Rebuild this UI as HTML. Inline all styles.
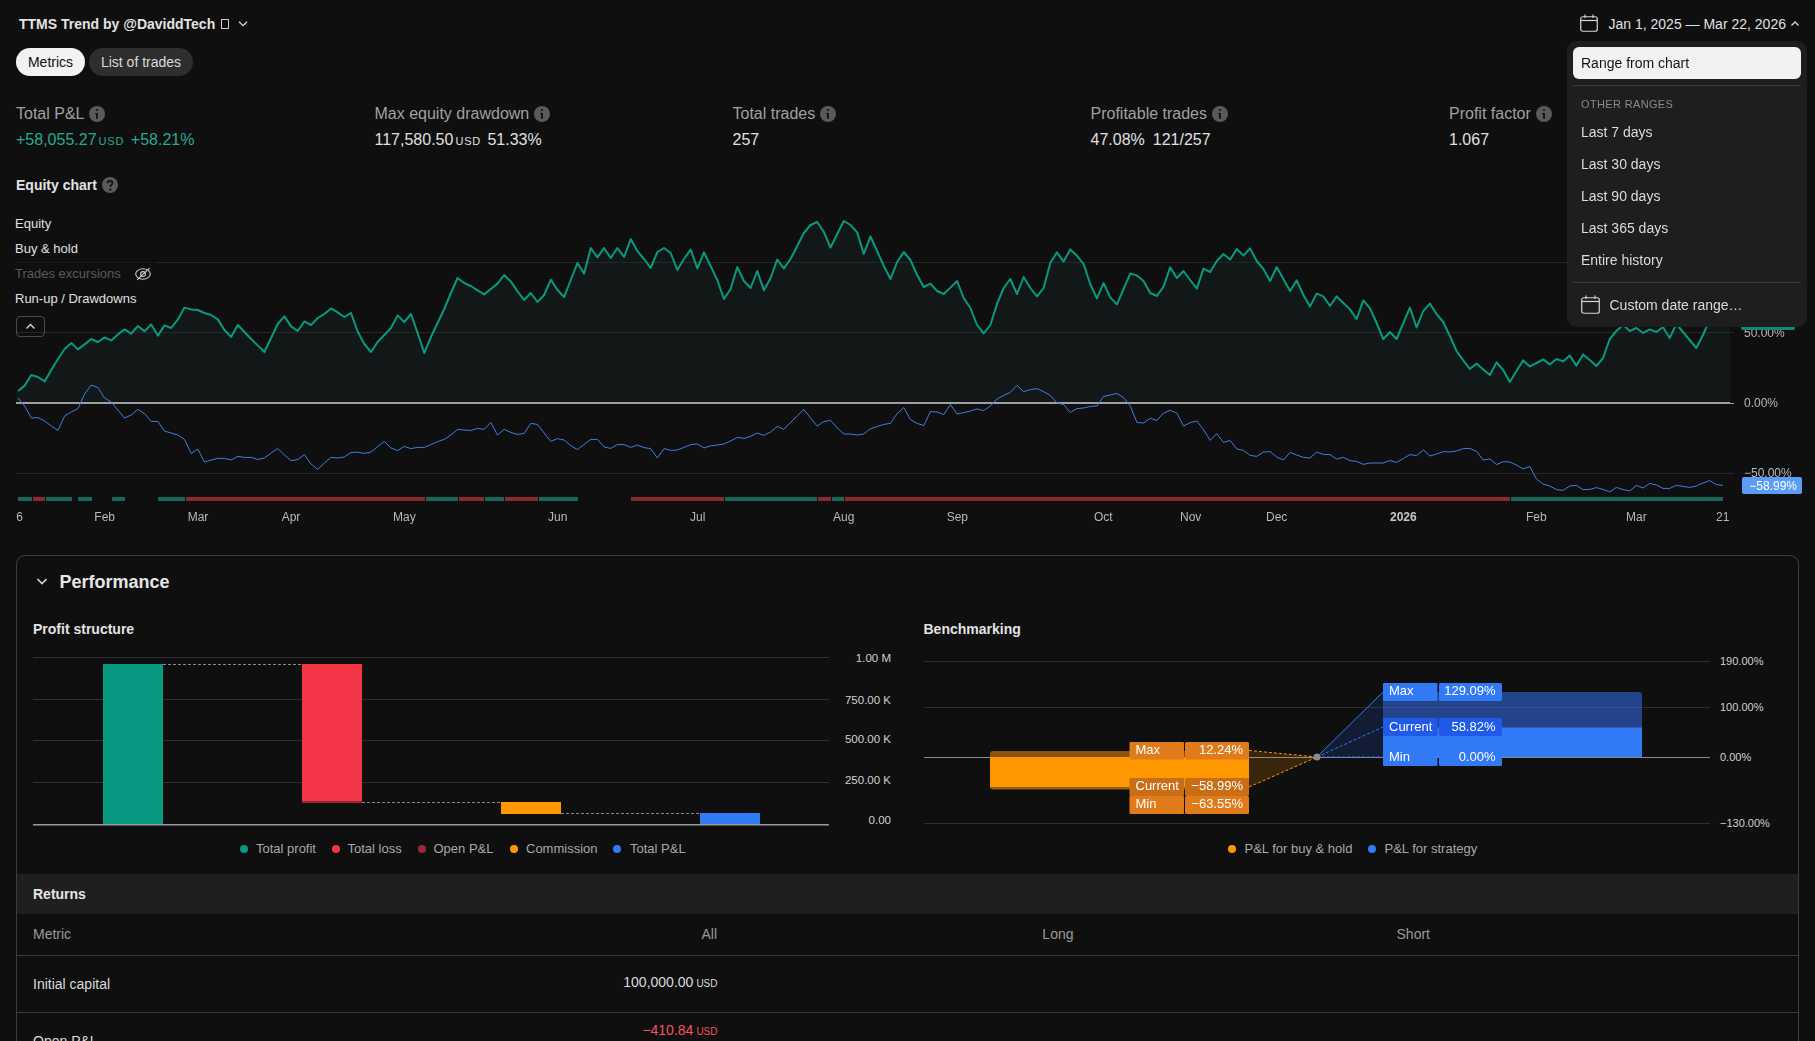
<!DOCTYPE html>
<html><head><meta charset="utf-8"><title>Strategy report</title>
<style>
html,body{margin:0;padding:0;background:#0f0f0f;width:1815px;height:1041px;overflow:hidden;font-family:"Liberation Sans",sans-serif}
.t{position:absolute;white-space:nowrap}
.z{z-index:6}
.layer{position:absolute;left:0;top:0}
.ic{position:absolute}
.pill{position:absolute;height:28px;border-radius:14px}
.usd{font-size:11px;margin-left:2px;letter-spacing:0.8px}
.usd2{font-size:10px;margin-left:3px}
.info{position:absolute;width:16px;height:16px;border-radius:8px;background:#5f5f5f;color:#121212;font:bold 12px/16px "Liberation Sans",sans-serif;text-align:center}
.q{position:absolute;width:16px;height:16px;border-radius:8px;background:#5f5f5f;color:#121212;font:bold 12px/16px "Liberation Sans",sans-serif;text-align:center}
.gs{position:absolute;left:0;top:0;width:0;height:0;will-change:transform}
.lgbg{position:absolute;background:rgba(15,15,15,0.6)}
</style></head><body>
<svg class="layer" width="1815" height="1041" viewBox="0 0 1815 1041"><path d="M16,391 L18.00,391.0 L24.66,385.6 L31.32,375.0 L37.98,377.0 L44.64,381.4 L51.30,370.0 L57.96,359.0 L64.62,349.0 L71.28,343.0 L77.94,349.4 L84.60,344.4 L91.26,339.0 L97.92,342.0 L104.58,337.4 L111.24,340.4 L117.90,334.4 L124.56,329.4 L131.22,333.6 L137.88,326.0 L144.54,331.4 L151.20,324.4 L157.86,335.6 L164.52,325.4 L171.18,328.0 L177.84,319.4 L184.50,307.6 L191.16,309.4 L197.82,310.0 L204.48,313.0 L211.14,315.0 L217.80,319.4 L224.46,330.0 L231.12,337.0 L237.78,325.0 L244.44,332.0 L251.10,339.0 L257.76,345.4 L264.42,352.0 L271.08,338.0 L277.74,324.0 L284.40,316.4 L291.06,326.4 L297.72,331.0 L304.38,321.4 L311.04,325.0 L317.70,318.0 L324.36,314.0 L331.02,308.4 L337.68,312.4 L344.34,317.0 L351.00,313.0 L357.66,331.5 L364.32,344.0 L370.98,352.0 L377.64,342.0 L384.30,335.0 L390.96,328.0 L397.62,315.4 L404.28,322.0 L410.94,314.0 L417.60,333.0 L424.26,353.0 L430.92,337.0 L437.58,323.0 L444.24,309.0 L450.90,293.0 L457.56,278.0 L464.22,283.0 L470.88,286.0 L477.54,290.4 L484.20,294.4 L490.86,289.0 L497.52,283.6 L504.18,275.0 L510.84,281.4 L517.50,291.4 L524.16,300.0 L530.82,293.0 L537.48,302.0 L544.14,295.0 L550.80,279.6 L557.46,290.0 L564.12,297.0 L570.78,280.0 L577.44,263.0 L584.10,273.6 L590.76,248.0 L597.42,257.4 L604.08,248.0 L610.74,258.0 L617.40,248.0 L624.06,257.0 L630.72,239.0 L637.38,251.0 L644.04,259.0 L650.70,268.0 L657.36,252.0 L664.02,248.0 L670.68,253.0 L677.34,270.0 L684.00,259.0 L690.66,249.6 L697.32,268.4 L703.98,252.4 L710.64,266.0 L717.30,280.0 L723.96,299.0 L730.62,289.0 L737.28,267.0 L743.94,281.0 L750.60,288.0 L757.26,271.0 L763.92,290.4 L770.58,278.0 L777.24,259.6 L783.90,268.4 L790.56,259.0 L797.22,246.0 L803.88,233.0 L810.54,225.0 L817.20,222.0 L823.86,232.0 L830.52,247.6 L837.18,234.0 L843.84,221.0 L850.50,225.0 L857.16,232.4 L863.82,254.0 L870.48,236.4 L877.14,251.0 L883.80,266.0 L890.46,279.0 L897.12,262.0 L903.78,252.0 L910.44,260.0 L917.10,275.0 L923.76,287.0 L930.42,283.6 L937.08,291.0 L943.74,294.0 L950.40,287.6 L957.06,281.0 L963.72,298.0 L970.38,308.0 L977.04,325.0 L983.70,333.4 L990.36,325.0 L997.02,304.0 L1003.68,288.0 L1010.34,279.0 L1017.00,294.0 L1023.66,277.0 L1030.32,288.0 L1036.98,296.4 L1043.64,288.0 L1050.30,263.0 L1056.96,252.4 L1063.62,261.6 L1070.28,249.4 L1076.94,255.6 L1083.60,264.0 L1090.26,284.0 L1096.92,298.4 L1103.58,283.0 L1110.24,297.4 L1116.90,304.4 L1123.56,289.0 L1130.22,273.6 L1136.88,275.4 L1143.54,281.0 L1150.20,293.0 L1156.86,296.0 L1163.52,286.6 L1170.18,267.4 L1176.84,278.0 L1183.50,271.0 L1190.16,280.0 L1196.82,288.6 L1203.48,268.6 L1210.14,272.0 L1216.80,261.0 L1223.46,254.0 L1230.12,259.6 L1236.78,249.0 L1243.44,255.6 L1250.10,248.4 L1256.76,261.0 L1263.42,269.0 L1270.08,281.0 L1276.74,267.0 L1283.40,279.0 L1290.06,291.0 L1296.72,280.4 L1303.38,295.0 L1310.04,306.4 L1316.70,293.6 L1323.36,296.4 L1330.02,306.0 L1336.68,296.4 L1343.34,303.0 L1350.00,309.4 L1356.66,319.0 L1363.32,300.4 L1369.98,308.4 L1376.64,323.0 L1383.30,339.0 L1389.96,332.0 L1396.62,339.0 L1403.28,323.0 L1409.94,307.6 L1416.60,327.5 L1423.26,311.0 L1429.92,303.6 L1436.58,314.0 L1443.24,322.0 L1449.90,336.0 L1456.56,351.0 L1463.22,360.4 L1469.88,369.0 L1476.54,363.6 L1483.20,369.4 L1489.86,375.0 L1496.52,362.4 L1503.18,370.0 L1509.84,382.0 L1516.50,371.0 L1523.16,360.4 L1529.82,366.4 L1536.48,363.0 L1543.14,359.4 L1549.80,364.4 L1556.46,359.0 L1563.12,361.4 L1569.78,355.6 L1576.44,365.6 L1583.10,354.4 L1589.76,360.0 L1596.42,366.0 L1603.08,358.0 L1609.74,339.0 L1616.40,331.0 L1623.06,325.0 L1629.72,331.0 L1636.38,328.0 L1643.04,333.0 L1649.70,329.4 L1656.36,332.0 L1663.02,327.0 L1669.68,338.0 L1676.34,324.0 L1683.00,332.0 L1689.66,340.0 L1696.32,348.0 L1702.98,335.0 L1709.64,320.0 L1716.30,318.0 L1722.96,321.0 L1730,321 L1730,402 L16,402 Z" fill="#121817"/><line x1="16" y1="262.5" x2="1734" y2="262.5" stroke="#2a2a2a" stroke-width="1" stroke-opacity="0.85"/><line x1="16" y1="332.5" x2="1734" y2="332.5" stroke="#2a2a2a" stroke-width="1" stroke-opacity="0.85"/><line x1="16" y1="473.5" x2="1734" y2="473.5" stroke="#2a2a2a" stroke-width="1" stroke-opacity="0.85"/><rect x="16" y="402" width="1714" height="2" fill="#a0a0a0"/><rect x="1730" y="403" width="4" height="1" fill="#a0a0a0"/><polyline points="18.00,391.0 24.66,385.6 31.32,375.0 37.98,377.0 44.64,381.4 51.30,370.0 57.96,359.0 64.62,349.0 71.28,343.0 77.94,349.4 84.60,344.4 91.26,339.0 97.92,342.0 104.58,337.4 111.24,340.4 117.90,334.4 124.56,329.4 131.22,333.6 137.88,326.0 144.54,331.4 151.20,324.4 157.86,335.6 164.52,325.4 171.18,328.0 177.84,319.4 184.50,307.6 191.16,309.4 197.82,310.0 204.48,313.0 211.14,315.0 217.80,319.4 224.46,330.0 231.12,337.0 237.78,325.0 244.44,332.0 251.10,339.0 257.76,345.4 264.42,352.0 271.08,338.0 277.74,324.0 284.40,316.4 291.06,326.4 297.72,331.0 304.38,321.4 311.04,325.0 317.70,318.0 324.36,314.0 331.02,308.4 337.68,312.4 344.34,317.0 351.00,313.0 357.66,331.5 364.32,344.0 370.98,352.0 377.64,342.0 384.30,335.0 390.96,328.0 397.62,315.4 404.28,322.0 410.94,314.0 417.60,333.0 424.26,353.0 430.92,337.0 437.58,323.0 444.24,309.0 450.90,293.0 457.56,278.0 464.22,283.0 470.88,286.0 477.54,290.4 484.20,294.4 490.86,289.0 497.52,283.6 504.18,275.0 510.84,281.4 517.50,291.4 524.16,300.0 530.82,293.0 537.48,302.0 544.14,295.0 550.80,279.6 557.46,290.0 564.12,297.0 570.78,280.0 577.44,263.0 584.10,273.6 590.76,248.0 597.42,257.4 604.08,248.0 610.74,258.0 617.40,248.0 624.06,257.0 630.72,239.0 637.38,251.0 644.04,259.0 650.70,268.0 657.36,252.0 664.02,248.0 670.68,253.0 677.34,270.0 684.00,259.0 690.66,249.6 697.32,268.4 703.98,252.4 710.64,266.0 717.30,280.0 723.96,299.0 730.62,289.0 737.28,267.0 743.94,281.0 750.60,288.0 757.26,271.0 763.92,290.4 770.58,278.0 777.24,259.6 783.90,268.4 790.56,259.0 797.22,246.0 803.88,233.0 810.54,225.0 817.20,222.0 823.86,232.0 830.52,247.6 837.18,234.0 843.84,221.0 850.50,225.0 857.16,232.4 863.82,254.0 870.48,236.4 877.14,251.0 883.80,266.0 890.46,279.0 897.12,262.0 903.78,252.0 910.44,260.0 917.10,275.0 923.76,287.0 930.42,283.6 937.08,291.0 943.74,294.0 950.40,287.6 957.06,281.0 963.72,298.0 970.38,308.0 977.04,325.0 983.70,333.4 990.36,325.0 997.02,304.0 1003.68,288.0 1010.34,279.0 1017.00,294.0 1023.66,277.0 1030.32,288.0 1036.98,296.4 1043.64,288.0 1050.30,263.0 1056.96,252.4 1063.62,261.6 1070.28,249.4 1076.94,255.6 1083.60,264.0 1090.26,284.0 1096.92,298.4 1103.58,283.0 1110.24,297.4 1116.90,304.4 1123.56,289.0 1130.22,273.6 1136.88,275.4 1143.54,281.0 1150.20,293.0 1156.86,296.0 1163.52,286.6 1170.18,267.4 1176.84,278.0 1183.50,271.0 1190.16,280.0 1196.82,288.6 1203.48,268.6 1210.14,272.0 1216.80,261.0 1223.46,254.0 1230.12,259.6 1236.78,249.0 1243.44,255.6 1250.10,248.4 1256.76,261.0 1263.42,269.0 1270.08,281.0 1276.74,267.0 1283.40,279.0 1290.06,291.0 1296.72,280.4 1303.38,295.0 1310.04,306.4 1316.70,293.6 1323.36,296.4 1330.02,306.0 1336.68,296.4 1343.34,303.0 1350.00,309.4 1356.66,319.0 1363.32,300.4 1369.98,308.4 1376.64,323.0 1383.30,339.0 1389.96,332.0 1396.62,339.0 1403.28,323.0 1409.94,307.6 1416.60,327.5 1423.26,311.0 1429.92,303.6 1436.58,314.0 1443.24,322.0 1449.90,336.0 1456.56,351.0 1463.22,360.4 1469.88,369.0 1476.54,363.6 1483.20,369.4 1489.86,375.0 1496.52,362.4 1503.18,370.0 1509.84,382.0 1516.50,371.0 1523.16,360.4 1529.82,366.4 1536.48,363.0 1543.14,359.4 1549.80,364.4 1556.46,359.0 1563.12,361.4 1569.78,355.6 1576.44,365.6 1583.10,354.4 1589.76,360.0 1596.42,366.0 1603.08,358.0 1609.74,339.0 1616.40,331.0 1623.06,325.0 1629.72,331.0 1636.38,328.0 1643.04,333.0 1649.70,329.4 1656.36,332.0 1663.02,327.0 1669.68,338.0 1676.34,324.0 1683.00,332.0 1689.66,340.0 1696.32,348.0 1702.98,335.0 1709.64,320.0 1716.30,318.0 1722.96,321.0" fill="none" stroke="#089981" stroke-width="2" stroke-linejoin="round"/><polyline points="18.00,398.0 24.66,406.0 31.32,418.0 37.98,417.6 44.64,421.0 51.30,426.0 57.96,430.4 64.62,416.0 71.28,412.0 77.94,408.6 84.60,394.0 91.26,385.0 97.92,387.6 104.58,398.0 111.24,402.0 117.90,410.0 124.56,418.0 131.22,415.0 137.88,409.4 144.54,413.6 151.20,421.4 157.86,421.4 164.52,431.0 171.18,433.0 177.84,435.0 184.50,439.4 191.16,453.6 197.82,449.0 204.48,462.0 211.14,460.0 217.80,458.4 224.46,458.4 231.12,460.0 237.78,456.4 244.44,457.4 251.10,457.4 257.76,459.4 264.42,458.0 271.08,453.0 277.74,448.4 284.40,455.0 291.06,460.6 297.72,459.6 304.38,454.6 311.04,464.0 317.70,469.4 324.36,463.0 331.02,457.4 337.68,458.0 344.34,457.0 351.00,452.4 357.66,452.2 364.32,453.4 370.98,452.0 377.64,446.6 384.30,441.4 390.96,448.0 397.62,450.6 404.28,446.4 410.94,448.6 417.60,447.4 424.26,447.4 430.92,444.6 437.58,441.6 444.24,439.4 450.90,435.0 457.56,429.4 464.22,430.0 470.88,430.4 477.54,428.4 484.20,429.4 490.86,422.4 497.52,435.0 504.18,429.4 510.84,432.4 517.50,434.4 524.16,433.4 530.82,423.4 537.48,424.4 544.14,433.0 550.80,441.4 557.46,438.6 564.12,440.0 570.78,445.6 577.44,449.6 584.10,444.4 590.76,439.4 597.42,439.4 604.08,447.0 610.74,448.4 617.40,444.6 624.06,444.6 630.72,447.4 637.38,445.0 644.04,447.6 650.70,448.6 657.36,458.0 664.02,448.6 670.68,450.4 677.34,450.0 684.00,447.4 690.66,444.6 697.32,444.0 703.98,448.0 710.64,445.8 717.30,445.0 723.96,444.0 730.62,441.0 737.28,437.4 743.94,438.4 750.60,436.4 757.26,433.0 763.92,435.4 770.58,432.0 777.24,426.4 783.90,429.4 790.56,422.4 797.22,416.0 803.88,409.4 810.54,418.0 817.20,426.0 823.86,421.6 830.52,420.4 837.18,428.0 843.84,434.0 850.50,434.0 857.16,435.0 863.82,434.0 870.48,428.6 877.14,426.6 883.80,424.4 890.46,423.4 897.12,413.6 903.78,407.6 910.44,419.6 917.10,423.4 923.76,425.6 930.42,411.6 937.08,412.0 943.74,414.6 950.40,404.4 957.06,414.0 963.72,412.6 970.38,411.0 977.04,409.0 983.70,410.6 990.36,406.0 997.02,399.0 1003.68,395.4 1010.34,392.4 1017.00,385.4 1023.66,391.6 1030.32,389.6 1036.98,388.6 1043.64,391.6 1050.30,395.4 1056.96,403.0 1063.62,404.5 1070.28,412.4 1076.94,408.6 1083.60,408.0 1090.26,406.4 1096.92,406.0 1103.58,396.4 1110.24,395.0 1116.90,393.4 1123.56,397.6 1130.22,406.0 1136.88,422.4 1143.54,423.0 1150.20,418.4 1156.86,420.4 1163.52,413.0 1170.18,410.4 1176.84,413.0 1183.50,426.0 1190.16,422.6 1196.82,421.0 1203.48,429.6 1210.14,440.4 1216.80,433.6 1223.46,442.4 1230.12,440.4 1236.78,449.0 1243.44,450.4 1250.10,455.4 1256.76,456.4 1263.42,452.0 1270.08,451.6 1276.74,457.0 1283.40,460.0 1290.06,452.4 1296.72,455.0 1303.38,457.4 1310.04,458.0 1316.70,452.0 1323.36,454.4 1330.02,454.6 1336.68,459.0 1343.34,457.4 1350.00,460.6 1356.66,461.4 1363.32,464.4 1369.98,463.0 1376.64,463.0 1383.30,463.0 1389.96,460.6 1396.62,462.4 1403.28,458.6 1409.94,454.6 1416.60,455.6 1423.26,450.0 1429.92,456.0 1436.58,454.0 1443.24,451.6 1449.90,452.0 1456.56,451.0 1463.22,448.6 1469.88,448.4 1476.54,451.4 1483.20,460.0 1489.86,459.0 1496.52,464.6 1503.18,461.6 1509.84,462.0 1516.50,465.0 1523.16,469.0 1529.82,466.4 1536.48,479.0 1543.14,484.0 1549.80,486.0 1556.46,489.6 1563.12,490.4 1569.78,486.0 1576.44,485.4 1583.10,489.6 1589.76,489.4 1596.42,487.6 1603.08,489.4 1609.74,492.0 1616.40,487.4 1623.06,489.6 1629.72,491.0 1636.38,485.4 1643.04,488.0 1649.70,483.4 1656.36,485.0 1663.02,488.4 1669.68,488.4 1676.34,485.4 1683.00,486.4 1689.66,487.4 1696.32,486.0 1702.98,483.0 1709.64,480.6 1716.30,484.6 1722.96,485.4" fill="none" stroke="#3f7fe0" stroke-width="1" stroke-linejoin="round"/><rect x="18" y="497" width="14" height="4" fill="#16695a"/><rect x="33" y="497" width="12" height="4" fill="#8c2830"/><rect x="46" y="497" width="26" height="4" fill="#16695a"/><rect x="78" y="497" width="14" height="4" fill="#16695a"/><rect x="112" y="497" width="13" height="4" fill="#16695a"/><rect x="158" y="497" width="27" height="4" fill="#16695a"/><rect x="186" y="497" width="239" height="4" fill="#8c2830"/><rect x="426" y="497" width="32" height="4" fill="#16695a"/><rect x="459" y="497" width="25" height="4" fill="#8c2830"/><rect x="485" y="497" width="19" height="4" fill="#16695a"/><rect x="505" y="497" width="33" height="4" fill="#8c2830"/><rect x="539" y="497" width="39" height="4" fill="#16695a"/><rect x="631" y="497" width="93" height="4" fill="#8c2830"/><rect x="725" y="497" width="92" height="4" fill="#16695a"/><rect x="818" y="497" width="13" height="4" fill="#8c2830"/><rect x="832" y="497" width="12" height="4" fill="#16695a"/><rect x="845" y="497" width="665" height="4" fill="#8c2830"/><rect x="1511" y="497" width="212" height="4" fill="#16695a"/><line x1="33" y1="657.5" x2="829" y2="657.5" stroke="#2e2e2e" stroke-width="1"/><line x1="33" y1="699.5" x2="829" y2="699.5" stroke="#2e2e2e" stroke-width="1"/><line x1="33" y1="740.5" x2="829" y2="740.5" stroke="#2e2e2e" stroke-width="1"/><line x1="33" y1="782.5" x2="829" y2="782.5" stroke="#2e2e2e" stroke-width="1"/><rect x="33" y="824" width="796" height="1.5" fill="#9a9a9a"/><rect x="103" y="664" width="60" height="160" fill="#089981"/><rect x="302" y="664" width="60" height="137.5" fill="#f23645"/><rect x="302" y="801.5" width="60" height="1.5" fill="#992b35"/><rect x="501" y="802" width="60" height="12" fill="#ff9800"/><rect x="700" y="813" width="60" height="11" fill="#2f7bf5"/><line x1="163" y1="664.5" x2="302" y2="664.5" stroke="#8a8a8a" stroke-width="1" stroke-dasharray="3 2"/><line x1="362" y1="802.5" x2="501" y2="802.5" stroke="#8a8a8a" stroke-width="1" stroke-dasharray="3 2"/><line x1="561" y1="813.5" x2="700" y2="813.5" stroke="#8a8a8a" stroke-width="1" stroke-dasharray="3 2"/><line x1="924" y1="661.5" x2="1710" y2="661.5" stroke="#2e2e2e" stroke-width="1"/><line x1="924" y1="707.5" x2="1710" y2="707.5" stroke="#2e2e2e" stroke-width="1"/><line x1="924" y1="823.5" x2="1710" y2="823.5" stroke="#2e2e2e" stroke-width="1"/><rect x="924" y="757" width="786" height="1" fill="#8a8a8a"/><path d="M990,754 Q990,751 993,751 L1249,751 L1249,757 L990,757 Z" fill="#8a5410"/><rect x="990" y="757" width="259" height="30" fill="#ff9800"/><path d="M990,787 L1249,787 L1249,789.5 L993,789.5 Q990,789.5 990,786.5 Z" fill="#9a5c0e"/><path d="M1249,751 L1317,757 L1249,787 Z" fill="#ff9800" fill-opacity="0.17"/><line x1="1249" y1="750.5" x2="1317" y2="757" stroke="#ff9800" stroke-width="1" stroke-dasharray="3 2"/><line x1="1249" y1="787" x2="1317" y2="757" stroke="#ff9800" stroke-width="1" stroke-dasharray="3 2"/><path d="M1383,692 L1639,692 Q1642,692 1642,695 L1642,728 L1383,728 Z" fill="#23438a"/><rect x="1383" y="727.5" width="259" height="29.5" fill="#3179f5"/><path d="M1317,757 L1383,692 L1383,757 Z" fill="#2962ff" fill-opacity="0.16"/><line x1="1317" y1="757" x2="1383" y2="692" stroke="#3179f5" stroke-width="1"/><line x1="1317" y1="757" x2="1383" y2="727" stroke="#3179f5" stroke-width="1" stroke-dasharray="3 2"/><line x1="1317" y1="757" x2="1383" y2="757" stroke="#3179f5" stroke-width="1" stroke-dasharray="3 2"/><rect x="1129.5" y="742" width="54.5" height="17.5" rx="1" fill="#e07b1c"/><rect x="1185" y="742" width="64" height="17.5" rx="1.5" fill="#e07b1c"/><rect x="1129.5" y="778" width="54.5" height="18" rx="1" fill="#c96d16"/><rect x="1185" y="778" width="64" height="18" rx="1.5" fill="#c96d16"/><rect x="1129.5" y="796" width="54.5" height="18" rx="1" fill="#e07b1c"/><rect x="1185" y="796" width="64" height="18" rx="1.5" fill="#e07b1c"/><rect x="1383" y="683" width="54.5" height="18" rx="1" fill="#3179f5"/><rect x="1439" y="683" width="63" height="18" rx="1.5" fill="#3179f5"/><rect x="1383" y="718" width="54.5" height="18" rx="1" fill="#1f5be8"/><rect x="1439" y="718" width="63" height="18" rx="1.5" fill="#1f5be8"/><rect x="1383" y="748" width="54.5" height="18" rx="1" fill="#3179f5"/><rect x="1439" y="748" width="63" height="18" rx="1.5" fill="#3179f5"/><line x1="1383" y1="707.5" x2="1642" y2="707.5" stroke="#ffffff" stroke-opacity="0.07" stroke-width="1"/><circle cx="1317" cy="757" r="3.5" fill="#8a8a8a"/><circle cx="244" cy="849" r="4" fill="#089981"/><circle cx="336" cy="849" r="4" fill="#f23645"/><circle cx="422" cy="849" r="4" fill="#992b35"/><circle cx="514" cy="849" r="4" fill="#ff9800"/><circle cx="617" cy="849" r="4" fill="#2f7bf5"/><circle cx="1232" cy="849" r="4" fill="#ff9800"/><circle cx="1372" cy="849" r="4" fill="#2f7bf5"/></svg>
<div class="t" style="left:19px;top:15.95px;font-size:14px;line-height:17px;color:#e3e3e3;font-weight:700;">TTMS Trend by @DaviddTech</div>
<div style="position:absolute;left:220.5px;top:19px;width:6px;height:8px;border:1px solid #c8c8c8"></div>
<svg class="ic" style="left:238px;top:20px" width="10" height="8" viewBox="0 0 10 8"><path d="M1,1.8 L5,5.6 L9,1.8" fill="none" stroke="#d6d6d6" stroke-width="1.3"/></svg>
<div class="pill" style="left:16px;top:48px;width:69px;background:#f2f2f2"></div>
<div class="pill" style="left:89px;top:48px;width:104px;background:#2e2e2e"></div>
<div class="t" style="left:50.5px;transform:translateX(-50%);top:53.65px;font-size:14px;line-height:17px;color:#0f0f0f;font-weight:400;">Metrics</div>
<div class="t" style="left:141px;transform:translateX(-50%);top:53.65px;font-size:14px;line-height:17px;color:#dbdbdb;font-weight:400;">List of trades</div>
<div class="t" style="left:16px;top:104.26px;font-size:16px;line-height:19px;color:#a0a0a0;font-weight:400;">Total P&amp;L</div>
<div class="t" style="left:374.5px;top:104.26px;font-size:16px;line-height:19px;color:#a0a0a0;font-weight:400;">Max equity drawdown</div>
<div class="t" style="left:732.5px;top:104.26px;font-size:16px;line-height:19px;color:#a0a0a0;font-weight:400;">Total trades</div>
<div class="t" style="left:1090.5px;top:104.26px;font-size:16px;line-height:19px;color:#a0a0a0;font-weight:400;">Profitable trades</div>
<div class="t" style="left:1449px;top:104.26px;font-size:16px;line-height:19px;color:#a0a0a0;font-weight:400;">Profit factor</div>
<svg class="ic" style="left:89px;top:106px" width="16" height="16" viewBox="0 0 16 16"><circle cx="8" cy="8" r="8" fill="#5a5a5a"/><rect x="7.1" y="3.1" width="1.8" height="1.8" fill="#0f0f0f"/><path d="M6.1,7 H8.9 V12.8 H7.1 V8 H6.1 Z" fill="#0f0f0f"/></svg>
<svg class="ic" style="left:534px;top:106px" width="16" height="16" viewBox="0 0 16 16"><circle cx="8" cy="8" r="8" fill="#5a5a5a"/><rect x="7.1" y="3.1" width="1.8" height="1.8" fill="#0f0f0f"/><path d="M6.1,7 H8.9 V12.8 H7.1 V8 H6.1 Z" fill="#0f0f0f"/></svg>
<svg class="ic" style="left:820px;top:106px" width="16" height="16" viewBox="0 0 16 16"><circle cx="8" cy="8" r="8" fill="#5a5a5a"/><rect x="7.1" y="3.1" width="1.8" height="1.8" fill="#0f0f0f"/><path d="M6.1,7 H8.9 V12.8 H7.1 V8 H6.1 Z" fill="#0f0f0f"/></svg>
<svg class="ic" style="left:1212px;top:106px" width="16" height="16" viewBox="0 0 16 16"><circle cx="8" cy="8" r="8" fill="#5a5a5a"/><rect x="7.1" y="3.1" width="1.8" height="1.8" fill="#0f0f0f"/><path d="M6.1,7 H8.9 V12.8 H7.1 V8 H6.1 Z" fill="#0f0f0f"/></svg>
<svg class="ic" style="left:1536px;top:106px" width="16" height="16" viewBox="0 0 16 16"><circle cx="8" cy="8" r="8" fill="#5a5a5a"/><rect x="7.1" y="3.1" width="1.8" height="1.8" fill="#0f0f0f"/><path d="M6.1,7 H8.9 V12.8 H7.1 V8 H6.1 Z" fill="#0f0f0f"/></svg>
<div class="t" style="left:16px;top:129.56px;font-size:16px;line-height:19px;color:#22ab94;font-weight:400;">+58,055.27<span class="usd">USD</span><span style="margin-left:6.7px">+58.21%</span></div>
<div class="t" style="left:374.5px;top:129.56px;font-size:16px;line-height:19px;color:#e0e0e0;font-weight:400;">117,580.50<span class="usd">USD</span><span style="margin-left:6.4px">51.33%</span></div>
<div class="t" style="left:732.5px;top:129.56px;font-size:16px;line-height:19px;color:#e0e0e0;font-weight:400;">257</div>
<div class="t" style="left:1090.5px;top:129.56px;font-size:16px;line-height:19px;color:#e0e0e0;font-weight:400;">47.08%<span style="margin-left:8px">121/257</span></div>
<div class="t" style="left:1449px;top:129.56px;font-size:16px;line-height:19px;color:#e0e0e0;font-weight:400;">1.067</div>
<div class="t" style="left:16px;top:176.65px;font-size:14px;line-height:17px;color:#e3e3e3;font-weight:700;">Equity chart</div>
<svg class="ic" style="left:102px;top:177px" width="16" height="16" viewBox="0 0 16 16"><circle cx="8" cy="8" r="8" fill="#5a5a5a"/><path d="M5.6,6.1 Q5.7,3.9 8,3.9 Q10.4,3.9 10.4,5.9 Q10.4,7.1 9.2,7.9 Q8.3,8.5 8.3,9.9" fill="none" stroke="#0f0f0f" stroke-width="1.7"/><rect x="7.3" y="11.6" width="2" height="2" fill="#0f0f0f"/></svg>
<div class="lgbg" style="left:15px;top:214px;width:142px;height:100px"></div>
<div class="t" style="left:15px;top:215.90px;font-size:13px;line-height:16px;color:#e0e0e0;font-weight:400;">Equity</div>
<div class="t" style="left:15px;top:240.50px;font-size:13px;line-height:16px;color:#e0e0e0;font-weight:400;">Buy &amp; hold</div>
<div class="t" style="left:15px;top:265.50px;font-size:13px;line-height:16px;color:#5a5a5a;font-weight:400;">Trades excursions</div>
<svg class="ic" style="left:135px;top:267px" width="16" height="14" viewBox="0 0 16 14"><ellipse cx="8" cy="7" rx="7.3" ry="5.2" fill="none" stroke="#cfcfcf" stroke-width="1.05"/><circle cx="8" cy="7" r="2.4" fill="none" stroke="#cfcfcf" stroke-width="1.05"/><path d="M2.2,12.9 L14.4,1.2" stroke="#cfcfcf" stroke-width="1.05"/></svg>
<div class="t" style="left:15px;top:290.50px;font-size:13px;line-height:16px;color:#e0e0e0;font-weight:400;">Run-up / Drawdowns</div>
<div style="position:absolute;left:16px;top:316px;width:27px;height:19px;border:1px solid #4a4a4a;border-radius:4px"></div>
<svg class="ic" style="left:25px;top:323px" width="11" height="7" viewBox="0 0 11 7"><path d="M1.5,5.5 L5.5,1.5 L9.5,5.5" fill="none" stroke="#d6d6d6" stroke-width="1.4"/></svg>
<div class="gs"><div class="t" style="left:1744px;top:325.84px;font-size:12px;line-height:14px;color:#b8b8b8;font-weight:400;">50.00%</div><div style="position:absolute;left:1741px;top:313px;width:54px;height:16.7px;background:#0b8a74;border-radius:2px"></div><div class="t" style="left:1744px;top:395.54px;font-size:12px;line-height:14px;color:#b8b8b8;font-weight:400;">0.00%</div><div class="t" style="left:1744px;top:466.14px;font-size:12px;line-height:14px;color:#b8b8b8;font-weight:400;">−50.00%</div><div style="position:absolute;left:1741.5px;top:477px;width:60.5px;height:17px;background:#5b9cf6;border-radius:2px"></div><div class="t" style="left:1797px;transform:translateX(-100%);top:478.64px;font-size:12px;line-height:14px;color:#ffffff;font-weight:400;">−58.99%</div><div class="t" style="left:16.3px;top:509.84px;font-size:12px;line-height:14px;color:#b8b8b8;font-weight:400;">6</div><div class="t" style="left:94.3px;top:509.84px;font-size:12px;line-height:14px;color:#b8b8b8;font-weight:400;">Feb</div><div class="t" style="left:187.7px;top:509.84px;font-size:12px;line-height:14px;color:#b8b8b8;font-weight:400;">Mar</div><div class="t" style="left:281.7px;top:509.84px;font-size:12px;line-height:14px;color:#b8b8b8;font-weight:400;">Apr</div><div class="t" style="left:393px;top:509.84px;font-size:12px;line-height:14px;color:#b8b8b8;font-weight:400;">May</div><div class="t" style="left:548px;top:509.84px;font-size:12px;line-height:14px;color:#b8b8b8;font-weight:400;">Jun</div><div class="t" style="left:690px;top:509.84px;font-size:12px;line-height:14px;color:#b8b8b8;font-weight:400;">Jul</div><div class="t" style="left:833px;top:509.84px;font-size:12px;line-height:14px;color:#b8b8b8;font-weight:400;">Aug</div><div class="t" style="left:946.7px;top:509.84px;font-size:12px;line-height:14px;color:#b8b8b8;font-weight:400;">Sep</div><div class="t" style="left:1094px;top:509.84px;font-size:12px;line-height:14px;color:#b8b8b8;font-weight:400;">Oct</div><div class="t" style="left:1180px;top:509.84px;font-size:12px;line-height:14px;color:#b8b8b8;font-weight:400;">Nov</div><div class="t" style="left:1266px;top:509.84px;font-size:12px;line-height:14px;color:#b8b8b8;font-weight:400;">Dec</div><div class="t" style="left:1390px;top:509.84px;font-size:12px;line-height:14px;color:#c8c8c8;font-weight:700;">2026</div><div class="t" style="left:1526px;top:509.84px;font-size:12px;line-height:14px;color:#b8b8b8;font-weight:400;">Feb</div><div class="t" style="left:1626px;top:509.84px;font-size:12px;line-height:14px;color:#b8b8b8;font-weight:400;">Mar</div><div class="t" style="left:1716px;top:509.84px;font-size:12px;line-height:14px;color:#b8b8b8;font-weight:400;">21</div></div>
<div style="position:absolute;left:16px;top:555px;width:1781px;height:600px;border:1px solid #3e3e3e;border-radius:9px"></div>
<svg class="ic" style="left:36px;top:577px" width="12" height="9" viewBox="0 0 12 9"><path d="M1.5,2 L6,6.5 L10.5,2" fill="none" stroke="#d6d6d6" stroke-width="1.6"/></svg>
<div class="t" style="left:59.5px;top:570.96px;font-size:18px;line-height:22px;color:#e6e6e6;font-weight:700;">Performance</div>
<div class="t" style="left:33px;top:620.65px;font-size:14px;line-height:17px;color:#e3e3e3;font-weight:700;">Profit structure</div>
<div class="t" style="left:923.5px;top:620.65px;font-size:14px;line-height:17px;color:#e3e3e3;font-weight:700;">Benchmarking</div>
<div class="t" style="left:891px;transform:translateX(-100%);top:651.02px;font-size:11.5px;line-height:14px;color:#d0d0d0;font-weight:400;">1.00 M</div>
<div class="t" style="left:891px;transform:translateX(-100%);top:692.52px;font-size:11.5px;line-height:14px;color:#d0d0d0;font-weight:400;">750.00 K</div>
<div class="t" style="left:891px;transform:translateX(-100%);top:732.02px;font-size:11.5px;line-height:14px;color:#d0d0d0;font-weight:400;">500.00 K</div>
<div class="t" style="left:891px;transform:translateX(-100%);top:773.02px;font-size:11.5px;line-height:14px;color:#d0d0d0;font-weight:400;">250.00 K</div>
<div class="t" style="left:891px;transform:translateX(-100%);top:813.02px;font-size:11.5px;line-height:14px;color:#d0d0d0;font-weight:400;">0.00</div>
<div class="t" style="left:256px;top:841.00px;font-size:13px;line-height:16px;color:#a8a8a8;font-weight:400;">Total profit</div>
<div class="t" style="left:347.5px;top:841.00px;font-size:13px;line-height:16px;color:#a8a8a8;font-weight:400;">Total loss</div>
<div class="t" style="left:433.5px;top:841.00px;font-size:13px;line-height:16px;color:#a8a8a8;font-weight:400;">Open P&amp;L</div>
<div class="t" style="left:526px;top:841.00px;font-size:13px;line-height:16px;color:#a8a8a8;font-weight:400;">Commission</div>
<div class="t" style="left:630px;top:841.00px;font-size:13px;line-height:16px;color:#a8a8a8;font-weight:400;">Total P&amp;L</div>
<div class="t" style="left:1244.5px;top:841.00px;font-size:13px;line-height:16px;color:#a8a8a8;font-weight:400;">P&amp;L for buy &amp; hold</div>
<div class="t" style="left:1384.5px;top:841.00px;font-size:13px;line-height:16px;color:#a8a8a8;font-weight:400;">P&amp;L for strategy</div>
<div class="t" style="left:1720px;top:654.69px;font-size:11px;line-height:13px;color:#d0d0d0;font-weight:400;">190.00%</div>
<div class="t" style="left:1720px;top:700.69px;font-size:11px;line-height:13px;color:#d0d0d0;font-weight:400;">100.00%</div>
<div class="t" style="left:1720px;top:750.69px;font-size:11px;line-height:13px;color:#d0d0d0;font-weight:400;">0.00%</div>
<div class="t" style="left:1720px;top:816.69px;font-size:11px;line-height:13px;color:#d0d0d0;font-weight:400;">−130.00%</div>
<div class="gs"><div class="t" style="left:1135.5px;top:741.50px;font-size:13px;line-height:16px;color:#ffffff;font-weight:400;">Max</div><div class="t" style="left:1243px;transform:translateX(-100%);top:741.50px;font-size:13px;line-height:16px;color:#ffffff;font-weight:400;">12.24%</div><div class="t" style="left:1135.5px;top:777.80px;font-size:13px;line-height:16px;color:#ffffff;font-weight:400;">Current</div><div class="t" style="left:1243px;transform:translateX(-100%);top:777.80px;font-size:13px;line-height:16px;color:#ffffff;font-weight:400;">−58.99%</div><div class="t" style="left:1135.5px;top:796.30px;font-size:13px;line-height:16px;color:#ffffff;font-weight:400;">Min</div><div class="t" style="left:1243px;transform:translateX(-100%);top:796.30px;font-size:13px;line-height:16px;color:#ffffff;font-weight:400;">−63.55%</div><div class="t" style="left:1389px;top:682.50px;font-size:13px;line-height:16px;color:#ffffff;font-weight:400;">Max</div><div class="t" style="left:1495.5px;transform:translateX(-100%);top:682.50px;font-size:13px;line-height:16px;color:#ffffff;font-weight:400;">129.09%</div><div class="t" style="left:1389px;top:718.50px;font-size:13px;line-height:16px;color:#ffffff;font-weight:400;">Current</div><div class="t" style="left:1495.5px;transform:translateX(-100%);top:718.50px;font-size:13px;line-height:16px;color:#ffffff;font-weight:400;">58.82%</div><div class="t" style="left:1389px;top:748.50px;font-size:13px;line-height:16px;color:#ffffff;font-weight:400;">Min</div><div class="t" style="left:1495.5px;transform:translateX(-100%);top:748.50px;font-size:13px;line-height:16px;color:#ffffff;font-weight:400;">0.00%</div></div>
<div style="position:absolute;left:17px;top:874px;width:1781px;height:40px;background:#1f1f1f"></div>
<div class="t" style="left:33px;top:885.65px;font-size:14px;line-height:17px;color:#e6e6e6;font-weight:700;">Returns</div>
<div class="t" style="left:33px;top:925.65px;font-size:14px;line-height:17px;color:#9a9a9a;font-weight:400;">Metric</div>
<div class="t" style="left:717px;transform:translateX(-100%);top:925.65px;font-size:14px;line-height:17px;color:#9a9a9a;font-weight:400;">All</div>
<div class="t" style="left:1073.5px;transform:translateX(-100%);top:925.65px;font-size:14px;line-height:17px;color:#9a9a9a;font-weight:400;">Long</div>
<div class="t" style="left:1430px;transform:translateX(-100%);top:925.65px;font-size:14px;line-height:17px;color:#9a9a9a;font-weight:400;">Short</div>
<div style="position:absolute;left:17px;top:955px;width:1781px;height:1px;background:#3a3a3a"></div>
<div style="position:absolute;left:17px;top:1012px;width:1781px;height:1px;background:#3a3a3a"></div>
<div class="t" style="left:33px;top:975.65px;font-size:14px;line-height:17px;color:#dbdbdb;font-weight:400;">Initial capital</div>
<div class="t" style="left:717.5px;transform:translateX(-100%);top:973.85px;font-size:14px;line-height:17px;color:#dbdbdb;font-weight:400;">100,000.00<span class="usd2">USD</span></div>
<div class="t" style="left:33px;top:1032.65px;font-size:14px;line-height:17px;color:#dbdbdb;font-weight:400;">Open P&amp;L</div>
<div class="t" style="left:717.5px;transform:translateX(-100%);top:1021.95px;font-size:14px;line-height:17px;color:#f7525f;font-weight:400;">−410.84<span class="usd2">USD</span></div>
<svg class="ic" style="left:1580px;top:14px" width="18" height="18" viewBox="0 0 18 18"><rect x="0.75" y="2.75" width="16.5" height="14.5" rx="2" fill="none" stroke="#d6d6d6" stroke-width="1.2"/><line x1="0.75" y1="6.5" x2="17.25" y2="6.5" stroke="#d6d6d6" stroke-width="1.2"/><line x1="5" y1="0.5" x2="5" y2="4" stroke="#d6d6d6" stroke-width="1.2"/><line x1="13" y1="0.5" x2="13" y2="4" stroke="#d6d6d6" stroke-width="1.2"/></svg>
<div class="t" style="left:1608.5px;top:15.85px;font-size:14px;line-height:17px;color:#e0e0e0;font-weight:400;">Jan 1, 2025 — Mar 22, 2026</div>
<svg class="ic" style="left:1790px;top:20px" width="10" height="7" viewBox="0 0 10 7"><path d="M1.5,5.5 L5,2 L8.5,5.5" fill="none" stroke="#d6d6d6" stroke-width="1.3"/></svg>
<div class="gs" style="z-index:5"><div style="position:absolute;left:0;top:0;z-index:5"><div style="position:absolute;left:1567px;top:41px;width:240px;height:286px;background:#1e1e1e;border-radius:10px"></div><div style="position:absolute;left:1573px;top:47px;width:228px;height:32px;background:#f2f2f2;border-radius:6px"></div><div style="position:absolute;left:1573px;top:85px;width:228px;height:1px;background:#3a3a3a"></div><div style="position:absolute;left:1573px;top:282px;width:228px;height:1px;background:#3a3a3a"></div></div><div class="t z" style="left:1581px;top:54.65px;font-size:14px;line-height:17px;color:#131313;font-weight:400;">Range from chart</div><div class="t z" style="left:1581px;top:97.99px;font-size:11px;line-height:13px;color:#8a8a8a;font-weight:400;letter-spacing:0.35px">OTHER RANGES</div><div class="t z" style="left:1581px;top:123.65px;font-size:14px;line-height:17px;color:#dbdbdb;font-weight:400;">Last 7 days</div><div class="t z" style="left:1581px;top:155.65px;font-size:14px;line-height:17px;color:#dbdbdb;font-weight:400;">Last 30 days</div><div class="t z" style="left:1581px;top:187.65px;font-size:14px;line-height:17px;color:#dbdbdb;font-weight:400;">Last 90 days</div><div class="t z" style="left:1581px;top:219.65px;font-size:14px;line-height:17px;color:#dbdbdb;font-weight:400;">Last 365 days</div><div class="t z" style="left:1581px;top:251.65px;font-size:14px;line-height:17px;color:#dbdbdb;font-weight:400;">Entire history</div><div class="t z" style="left:1609.5px;top:297.15px;font-size:14px;line-height:17px;color:#dbdbdb;font-weight:400;">Custom date range…</div><svg class="ic z" style="left:1581px;top:295px" width="19" height="19" viewBox="0 0 19 19"><rect x="0.75" y="2.75" width="17.5" height="15.5" rx="2" fill="none" stroke="#d6d6d6" stroke-width="1.2"/><line x1="0.75" y1="6.5" x2="18.25" y2="6.5" stroke="#d6d6d6" stroke-width="1.2"/><line x1="5" y1="0.5" x2="5" y2="4" stroke="#d6d6d6" stroke-width="1.2"/><line x1="14" y1="0.5" x2="14" y2="4" stroke="#d6d6d6" stroke-width="1.2"/></svg></div>
</body></html>
